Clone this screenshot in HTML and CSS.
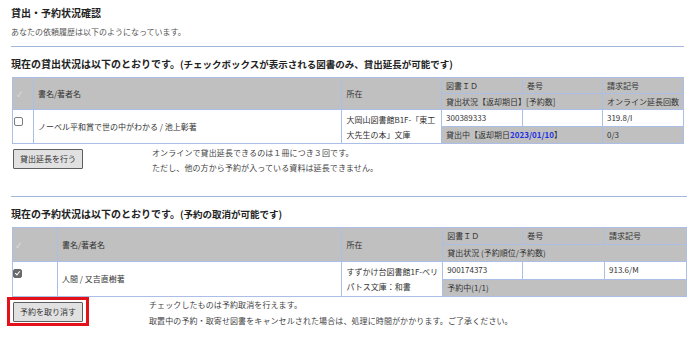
FILE: index.html
```html
<!DOCTYPE html>
<html lang="ja">
<head>
  <meta charset="UTF-8">
  <title>貸出・予約状況確認</title>
  <link rel="stylesheet" href="styles.css">
</head>
<body>
  <div class="page">
    <h1 class="title">貸出・予約状況確認</h1>
    <p class="lead">あなたの依頼履歴は以下のようになっています。</p>

    <section class="block block-loan">
      <h2>現在の貸出状況は以下のとおりです。<span class="sub">(チェックボックスが表示される図書のみ、貸出延長が可能です)</span></h2>
      <table class="status">
        <colgroup>
          <col class="c-check"><col class="c-title"><col class="c-place"><col class="c-id"><col class="c-vol"><col class="c-call">
        </colgroup>
        <tr class="head">
          <td rowspan="2" class="check"><span class="tick">&#10003;</span></td>
          <td rowspan="2">書名/著者名</td>
          <td rowspan="2">所在</td>
          <td>図書ＩＤ</td>
          <td>巻号</td>
          <td>請求記号</td>
        </tr>
        <tr class="head">
          <td colspan="2">貸出状況【返却期日】[予約数]</td>
          <td>オンライン延長回数</td>
        </tr>
        <tr>
          <td rowspan="2" class="check top"><span class="cb"></span></td>
          <td rowspan="2">ノーベル平和賞で世の中がわかる / 池上彰著</td>
          <td rowspan="2" class="place">大岡山図書館B1F-「東工大先生の本」文庫</td>
          <td>300389333</td>
          <td></td>
          <td>319.8/I</td>
        </tr>
        <tr class="shade">
          <td colspan="2">貸出中【返却期日<b class="due">2023/01/10</b>】</td>
          <td>0/3</td>
        </tr>
      </table>
      <div class="actions">
        <button class="btn">貸出延長を行う</button>
        <div class="notes">
          <p>オンラインで貸出延長できるのは１冊につき３回です。</p>
          <p>ただし、他の方から予約が入っている資料は延長できません。</p>
        </div>
      </div>
    </section>

    <section class="block block-reserve">
      <h2>現在の予約状況は以下のとおりです。<span class="sub">(予約の取消が可能です)</span></h2>
      <table class="status">
        <colgroup>
          <col class="c-check"><col class="c-title"><col class="c-place"><col class="c-id"><col class="c-vol"><col class="c-call">
        </colgroup>
        <tr class="head">
          <td rowspan="2" class="check"><span class="tick">&#10003;</span></td>
          <td rowspan="2">書名/著者名</td>
          <td rowspan="2">所在</td>
          <td>図書ＩＤ</td>
          <td>巻号</td>
          <td>請求記号</td>
        </tr>
        <tr class="head">
          <td colspan="3">貸出状況 (予約順位/予約数)</td>
        </tr>
        <tr>
          <td rowspan="2" class="check top"><span class="cb on"></span></td>
          <td rowspan="2">人間 / 又吉直樹著</td>
          <td rowspan="2" class="place">すずかけ台図書館1F-ベリパトス文庫：和書</td>
          <td>900174373</td>
          <td></td>
          <td>913.6/M</td>
        </tr>
        <tr class="shade">
          <td colspan="3">予約中(1/1)</td>
        </tr>
      </table>
      <div class="actions">
        <div class="mark">
          <button class="btn">予約を取り消す</button>
        </div>
        <div class="notes">
          <p>チェックしたものは予約取消を行えます。</p>
          <p>取置中の予約・取寄せ図書をキャンセルされた場合は、処理に時間がかかります。ご了承ください。</p>
        </div>
      </div>
    </section>
  </div>
</body>
</html>
```

FILE: styles.css
```css
body {
  margin: 0;
  background: #fff;
  color: #333;
  font-family: "Noto Sans CJK JP", "Noto Sans", sans-serif;
}
.page {
  padding: 6px 11px 0;
}
p {
  margin: 0;
}
.title {
  margin: 0;
  font-size: 10px;
  line-height: 14px;
  font-weight: bold;
  color: #222;
}
.lead {
  margin-top: 6px;
  font-size: 8px;
  line-height: 12px;
  color: #555;
}
.block {
  border-top: 1px solid #a3b6dc;
}
.block-loan {
  width: 673px;
  margin-top: 8px;
}
.block-reserve {
  width: 676px;
  margin-top: 21px;
}
.block h2 {
  margin: 10px 0 6px;
  font-size: 10px;
  line-height: 14px;
  font-weight: bold;
  color: #222;
}
.block h2 .sub {
  font-size: 9.5px;
}
.status {
  border-collapse: collapse;
  table-layout: fixed;
  margin-left: 1px;
  font-size: 8px;
  color: #333;
}
.status td {
  border: 1px solid #aabee6;
  padding: 1.5px 4px;
  line-height: 12px;
  height: 12px;
  white-space: nowrap;
  overflow: hidden;
}
.status td.place {
  white-space: normal;
  line-height: 15px;
  padding-right: 2px;
}
.block-loan .c-check { width: 21px; }
.block-loan .c-title { width: 309px; }
.block-loan .c-place { width: 100px; }
.block-loan .c-id { width: 81px; }
.block-loan .c-vol { width: 80px; }
.block-loan .c-call { width: 80px; }
.block-reserve .c-check { width: 45px; }
.block-reserve .c-title { width: 285px; }
.block-reserve .c-place { width: 101px; }
.block-reserve .c-id { width: 80px; }
.block-reserve .c-vol { width: 82px; }
.block-reserve .c-call { width: 82px; }
.block-reserve .status td {
  padding-top: 2px;
  padding-bottom: 2px;
}
.head td,
.shade td {
  background: #c0c0c0;
}
.status td.check {
  padding-left: 1px;
  padding-right: 0;
}
.block-reserve .status td.check {
  padding-left: 0;
}
.status td.top {
  vertical-align: top;
  padding-top: 7px;
}
.tick {
  color: #e4e4e4;
  font-size: 7px;
  padding-left: 3px;
}
.cb {
  display: block;
  width: 7px;
  height: 7px;
  border: 1px solid #7c7c7c;
  border-radius: 2px;
  background: #fff;
}
.cb.on {
  position: relative;
  background: #6a6a6a;
  border-color: #6a6a6a;
}
.cb.on::after {
  content: "";
  position: absolute;
  left: 2px;
  top: 0;
  width: 2px;
  height: 4px;
  border: solid #fff;
  border-width: 0 1.5px 1.5px 0;
  transform: rotate(40deg);
}
.due {
  color: #1f2fe0;
}
.actions {
  display: flex;
  align-items: flex-start;
}
.btn {
  width: 70px;
  height: 20px;
  padding: 0;
  border: 1px solid #5e5e5e;
  border-radius: 1px;
  background: #e1e1e1;
  color: #333;
  font-family: "Noto Sans CJK JP", sans-serif;
  font-size: 8px;
  line-height: 18px;
}
.block-loan .btn {
  margin: 5px 0 0 2px;
}
.block-loan .notes {
  margin: 1px 0 0 69px;
  line-height: 15px;
}
.mark {
  margin-left: -4px;
  padding: 2px 3px 1px;
  border: 3px solid #e4111b;
}
.mark .btn {
  display: block;
}
.block-reserve .notes {
  margin-left: 60px;
  line-height: 16px;
}
.notes {
  font-size: 8px;
  color: #444;
  letter-spacing: 0.1px;
}
```
